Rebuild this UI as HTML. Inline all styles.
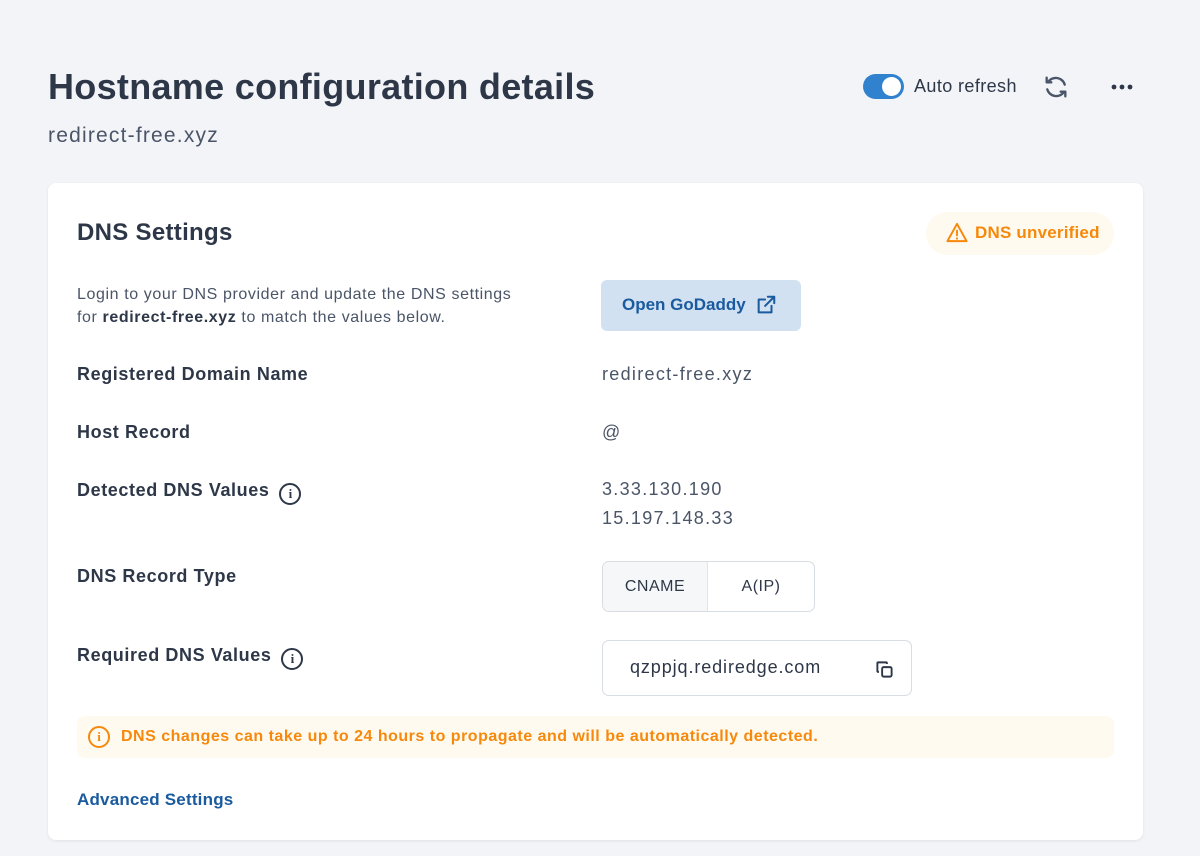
<!DOCTYPE html>
<html><head><meta charset="utf-8"><style>
*{box-sizing:border-box;margin:0;padding:0}
body{width:1200px;height:856px;background:#f3f4f8;font-family:"Liberation Sans",sans-serif;color:#2d3748;position:relative;overflow:hidden}
.abs{position:absolute}
h1{position:absolute;left:48px;top:66px;font-size:36px;font-weight:600;color:#2d3748;letter-spacing:0.3px}
.sub{left:48px;top:124px;font-size:21px;color:#4a5568;letter-spacing:1.2px}
.card{left:48px;top:183px;width:1095px;height:657px;background:#fff;border-radius:8px;box-shadow:0 1px 3px rgba(0,0,0,.08)}
.lbl{position:absolute;left:29px;font-size:18px;font-weight:600;color:#2d3748;letter-spacing:0.6px}
.val{position:absolute;left:554px;font-size:18px;color:#4a5568;letter-spacing:1.3px}
.info{display:inline-block;width:22px;height:22px;border:2px solid #2d3748;border-radius:50%;font-size:13px;font-weight:700;text-align:center;line-height:18px;vertical-align:-2px;margin-left:10px;font-family:"Liberation Serif",serif;letter-spacing:0}
</style></head><body>
<h1>Hostname configuration details</h1>
<div class="abs sub">redirect-free.xyz</div>
<div class="abs" style="left:863px;top:74px;width:41px;height:25px;background:#3182ce;border-radius:13px"><div style="position:absolute;right:3px;top:3px;width:19px;height:19px;border-radius:50%;background:#fff"></div></div>
<div class="abs" style="left:914px;top:76px;font-size:18px;color:#2d3748;letter-spacing:0.4px">Auto refresh</div>
<svg class="abs" style="left:1042px;top:73px" width="28" height="28" viewBox="0 0 24 24" fill="none" stroke="#4a5568" stroke-width="2" stroke-linecap="round" stroke-linejoin="round"><path d="M19.5 10A8 8 0 0 0 5 8M4 4v4h4"/><path d="M4.5 14A8 8 0 0 0 19 16M20 20v-4h-4"/></svg>
<svg class="abs" style="left:1111px;top:84px" width="22" height="6"><circle cx="3" cy="3" r="2.4" fill="#2d3748"/><circle cx="11" cy="3" r="2.4" fill="#2d3748"/><circle cx="19" cy="3" r="2.4" fill="#2d3748"/></svg>
<div class="abs card">
<div class="abs" style="left:29px;top:36px;font-size:24px;font-weight:600;letter-spacing:0.3px">DNS Settings</div>
<div class="abs" style="left:878px;top:29px;width:188px;height:43px;background:#fffaf0;border-radius:22px;color:#f6890c;font-size:17px;font-weight:600;padding:11px 0 0 49px;letter-spacing:0.2px">DNS unverified</div>
<svg class="abs" style="left:897px;top:38px" width="24" height="23" viewBox="0 0 24 24" fill="none" stroke="#f6890c" stroke-width="2" stroke-linejoin="round" stroke-linecap="round"><path d="M12 3L2 21h20z"/><path d="M12 10v5M12 18v.5"/></svg>
<div class="abs" style="left:29px;top:100px;font-size:16px;line-height:23px;color:#4a5568;letter-spacing:0.6px">Login to your DNS provider and update the DNS settings<br>for <b style="color:#2d3748">redirect-free.xyz</b> to match the values below.</div>
<div class="abs" style="left:553px;top:97px;width:200px;height:51px;background:#d2e1f1;border-radius:6px;color:#1a5a9e;font-size:17px;font-weight:600;padding:15px 0 0 21px">Open GoDaddy</div>
<svg class="abs" style="left:707px;top:111px" width="22" height="22" viewBox="0 0 24 24" fill="none" stroke="#1a5a9e" stroke-width="2.2" stroke-linecap="round" stroke-linejoin="round"><path d="M18 13v7H4V6h7"/><path d="M14 3h7v7M21 3L11 13"/></svg>
<div class="lbl" style="top:181px">Registered Domain Name</div><div class="val" style="top:181px">redirect-free.xyz</div>
<div class="lbl" style="top:239px">Host Record</div><div class="val" style="top:239px">@</div>
<div class="lbl" style="top:297px">Detected DNS Values<span class="info">i</span></div>
<div class="val" style="line-height:29px;top:292px">3.33.130.190<br>15.197.148.33</div>
<div class="lbl" style="top:383px">DNS Record Type</div>
<div class="abs" style="left:554px;top:378px;width:213px;height:51px;border:1.5px solid #d8dce3;border-radius:7px;overflow:hidden;font-size:16px;display:flex;letter-spacing:0.5px"><div style="width:105px;background:#f6f7f9;border-right:1px solid #e2e6ea;text-align:center;line-height:50px">CNAME</div><div style="flex:1;text-align:center;line-height:50px">A(IP)</div></div>
<div class="lbl" style="top:462px">Required DNS Values<span class="info">i</span></div>
<div class="abs" style="left:554px;top:457px;width:310px;height:56px;border:1.5px solid #d8dce3;border-radius:7px;font-size:18px;padding:16px 0 0 27px;letter-spacing:0.9px">qzppjq.rediredge.com</div>
<svg class="abs" style="left:827px;top:477px" width="19" height="19" viewBox="0 0 24 24" fill="none" stroke="#2d3748" stroke-width="2.4" stroke-linejoin="round"><rect x="9" y="9" width="12" height="12" rx="2"/><path d="M5 15H4a1 1 0 0 1-1-1V4a1 1 0 0 1 1-1h10a1 1 0 0 1 1 1v1"/></svg>
<div class="abs" style="left:29px;top:533px;width:1037px;height:42px;background:#fffaf0;border-radius:8px;color:#f6890c;font-size:16px;font-weight:600;padding:12px 0 0 44px;letter-spacing:0.5px">DNS changes can take up to 24 hours to propagate and will be automatically detected.</div>
<div class="abs" style="left:40px;top:543px;width:22px;height:22px;border:2px solid #f6890c;border-radius:50%;color:#f6890c;font-size:13px;font-weight:700;text-align:center;line-height:18px;font-family:'Liberation Serif',serif">i</div>
<div class="abs" style="left:29px;top:607px;font-size:17px;font-weight:600;color:#1a5a9e;letter-spacing:0.2px">Advanced Settings</div>
</div>
</body></html>
